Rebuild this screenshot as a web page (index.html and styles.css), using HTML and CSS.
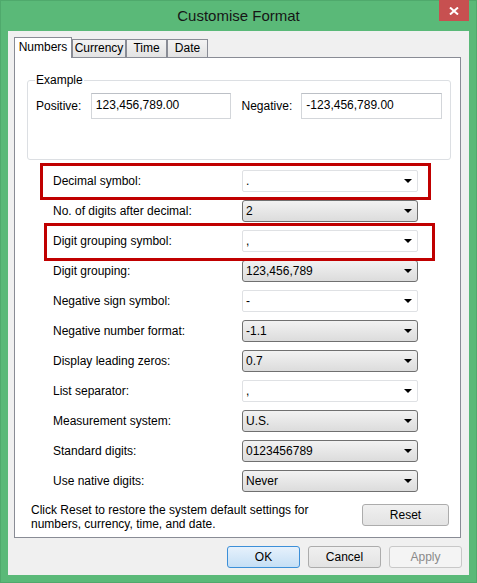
FILE: index.html
```html
<!DOCTYPE html>
<html>
<head>
<meta charset="utf-8">
<link rel="stylesheet" href="styles.css">
</head>
<body>
<div class="window">
  <div class="titlebar">
    <div></div>
    <div class="title">Customise Format</div>
    <div class="close">
      <svg width="10" height="8" viewBox="0 0 10 8"><path d="M1 0.5 L9 7.5 M9 0.5 L1 7.5" stroke="#fff" stroke-width="2" fill="none"/></svg>
    </div>
  </div>
  <div class="client">
    <div class="tabs">
      <div class="tab active w-num">Numbers</div>
      <div class="tab w-cur">Currency</div>
      <div class="tab w-time">Time</div>
      <div class="tab w-date">Date</div>
    </div>
    <div class="panel">
      <fieldset class="example">
        <legend>Example</legend>
        <div class="ex-row">
          <span class="lbl-pos">Positive:</span>
          <div class="tb tb-pos">123,456,789.00</div>
          <span class="lbl-neg">Negative:</span>
          <div class="tb tb-neg">-123,456,789.00</div>
        </div>
      </fieldset>
      <div class="rows">
        <span class="lbl">Decimal symbol:</span><div class="combo edit">.</div>
        <span class="lbl">No. of digits after decimal:</span><div class="combo">2</div>
        <span class="lbl">Digit grouping symbol:</span><div class="combo edit">,</div>
        <span class="lbl">Digit grouping:</span><div class="combo">123,456,789</div>
        <span class="lbl">Negative sign symbol:</span><div class="combo edit">-</div>
        <span class="lbl">Negative number format:</span><div class="combo">-1.1</div>
        <span class="lbl">Display leading zeros:</span><div class="combo">0.7</div>
        <span class="lbl">List separator:</span><div class="combo edit">,</div>
        <span class="lbl">Measurement system:</span><div class="combo">U.S.</div>
        <span class="lbl">Standard digits:</span><div class="combo">0123456789</div>
        <span class="lbl">Use native digits:</span><div class="combo">Never</div>
      </div>
      <div class="reset-row">
        <p class="reset-text">Click Reset to restore the system default settings for<br>numbers, currency, time, and date.</p>
        <div class="btn btn-reset">Reset</div>
      </div>
      <div class="mark mark-1"></div>
      <div class="mark mark-2"></div>
    </div>
    <div class="buttons">
      <div class="btn default">OK</div>
      <div class="btn">Cancel</div>
      <div class="btn disabled">Apply</div>
    </div>
  </div>
</div>
</body>
</html>
```
FILE: styles.css
```css
html, body {
  margin: 0;
  padding: 0;
  background: #ffffff;
}
body {
  font-family: "Liberation Sans", Arial, sans-serif;
  font-size: 12px;
  color: #000;
}
.window {
  width: 477px;
  height: 583px;
  box-sizing: border-box;
  background: #5ab978;
  box-shadow: inset 0 0 0 1px #4fa96c;
  display: flex;
  flex-direction: column;
}
.titlebar {
  height: 31px;
  box-sizing: border-box;
  padding: 0 8px;
  display: grid;
  grid-template-columns: 1fr auto 1fr;
  align-items: start;
}
.title {
  font-size: 15px;
  line-height: 31px;
  color: #161616;
}
.close {
  justify-self: end;
  width: 30px;
  height: 21px;
  background: #c75050;
  display: flex;
  align-items: center;
  justify-content: center;
}
.client {
  flex: 1;
  margin: 0 8px 8px 8px;
  background: #f0f0f0;
  padding: 6px 8px 0 6px;
  display: flex;
  flex-direction: column;
}
.tabs {
  display: flex;
  align-items: flex-end;
  height: 20px;
  position: relative;
  z-index: 1;
}
.tab {
  box-sizing: border-box;
  height: 18px;
  border: 1px solid #898c95;
  border-bottom: none;
  background: linear-gradient(#f3f3f3, #e3e3e3);
  text-align: center;
  line-height: 17px;
}
.tab.active {
  height: 21px;
  margin-bottom: -1px;
  background: #ffffff;
  line-height: 18px;
}
.w-num { width: 58px; }
.w-cur { width: 54px; }
.w-time { width: 41px; }
.w-date { width: 41px; }
.panel {
  position: relative;
  box-sizing: border-box;
  height: 481px;
  background: #ffffff;
  border: 1px solid #898c95;
}
.example {
  box-sizing: border-box;
  height: 87px;
  margin: 15px 9px 0 12px;
  padding: 0 8px 0 7px;
  border: 1px solid #dcdfe3;
  border-radius: 3px;
  min-width: 0;
}
.example legend {
  padding: 0 1px;
  line-height: 14px;
}
.ex-row {
  display: flex;
  align-items: center;
  margin-top: 6px;
}
.lbl-pos {
  width: 56px;
  padding-left: 1px;
  box-sizing: border-box;
}
.lbl-neg {
  width: 60px;
  margin-left: 11px;
}
.tb {
  box-sizing: border-box;
  height: 26px;
  border: 1px solid #d3d6da;
  border-top-color: #bcc0c6;
  padding: 1px 0 0 4px;
  line-height: 20px;
}
.tb-pos { width: 140px; }
.tb-neg { width: 141px; }
.rows {
  display: grid;
  grid-template-columns: 189px 176px;
  grid-auto-rows: 22px;
  row-gap: 8px;
  padding-left: 38px;
  margin-top: 10px;
}
.lbl {
  line-height: 22px;
}
.combo {
  position: relative;
  box-sizing: border-box;
  height: 22px;
  border: 1px solid #707070;
  border-radius: 3px;
  background: linear-gradient(#f2f2f2, #dcdcdc);
  padding-left: 3px;
  line-height: 20px;
}
.combo.edit {
  border-color: #dfe1e4;
  border-radius: 2px;
  background: #ffffff;
}
.combo::after {
  content: "";
  position: absolute;
  right: 5px;
  top: 8px;
  border-left: 4px solid transparent;
  border-right: 4px solid transparent;
  border-top: 4px solid #000;
}
.reset-row {
  display: flex;
  justify-content: space-between;
  align-items: flex-start;
  margin-top: 11px;
  padding: 0 11px 0 16px;
}
.reset-text {
  margin: 0;
  line-height: 14px;
}
.btn {
  box-sizing: border-box;
  width: 73px;
  height: 22px;
  border: 1px solid #acacac;
  border-radius: 3px;
  background: linear-gradient(#f0f0f0, #e3e3e3);
  display: flex;
  align-items: center;
  justify-content: center;
}
.btn-reset {
  width: 87px;
  margin-top: 1px;
}
.btn.default {
  border-color: #3c8fd8;
  background: linear-gradient(#e6f1fc, #c5dff5);
}
.btn.disabled {
  border-color: #c8c8c8;
  background: #f4f4f4;
  color: #8a8a8a;
}
.buttons {
  display: flex;
  justify-content: flex-end;
  gap: 8px;
  margin-top: 8px;
  margin-right: -1px;
}
.mark {
  position: absolute;
  box-sizing: border-box;
  border: 3px solid #c00000;
  width: 391px;
}
.mark-1 {
  left: 25px;
  top: 105px;
  height: 37px;
}
.mark-2 {
  left: 29px;
  top: 165px;
  height: 38px;
}
```
